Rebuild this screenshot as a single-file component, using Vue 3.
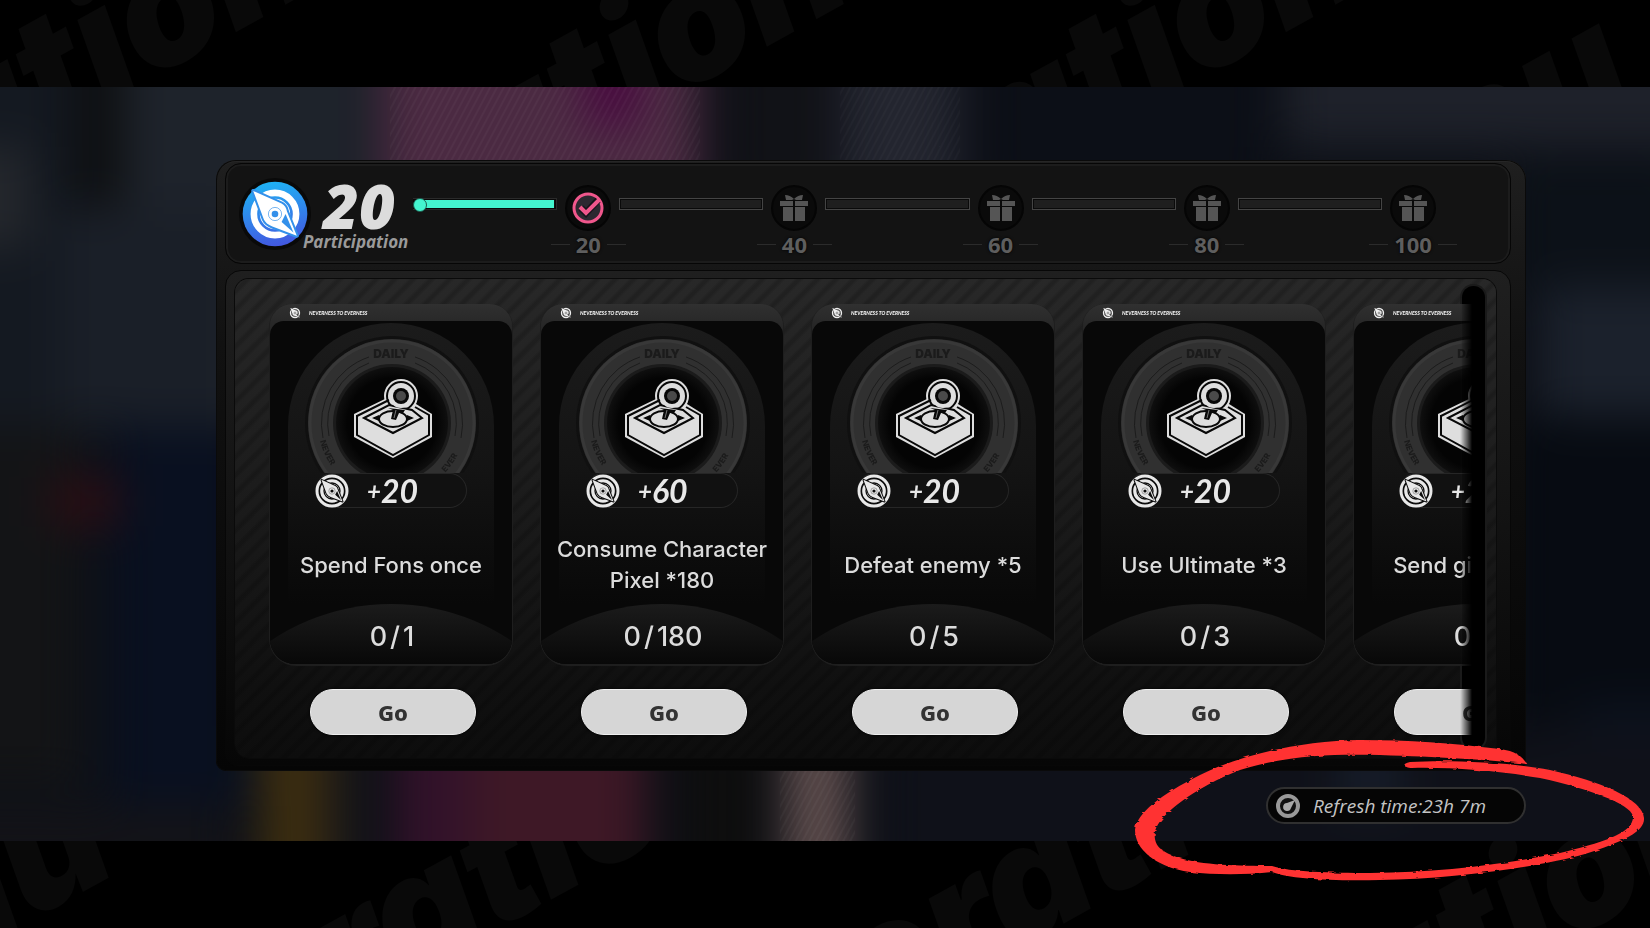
<template>
  <div class="page">
    <!-- Shared icon shapes -->
    <svg class="sprite" aria-hidden="true">
      <symbol id="compass" viewBox="0 0 100 100">
        <circle cx="50" cy="50" r="32" fill="none" stroke="currentColor" stroke-width="10" />
        <circle cx="50" cy="50" r="21" fill="none" stroke="currentColor" stroke-width="4" />
        <path d="M17 15 L60 34 Q67 38 68 46 L83 83 L46 69 Q36 65 33 58 Z" fill="currentColor" stroke="var(--cut)" stroke-width="6" stroke-linejoin="round" />
        <path d="M17 15 L60 34 Q67 38 68 46 L83 83 L46 69 Q36 65 33 58 Z" fill="currentColor" />
        <path d="M60 62 L66 50 L78 78 Z" fill="var(--cut)" />
        <circle cx="50" cy="50" r="10" fill="none" stroke="var(--cut)" stroke-width="1" />
        <circle cx="50" cy="50" r="5" fill="var(--cut)" />
      </symbol>
      <symbol id="gift" viewBox="0 0 28 28">
        <path d="M5 1 Q10 1 14 5 Q18 1 23 1 L22 6 L16 6 L14 5 L12 6 L6 6 Z" fill="currentColor" />
        <path d="M0 7 H13 V12 H0 Z M15 7 H28 V12 H15 Z" fill="currentColor" />
        <path d="M3 13 H13 V27 H3 Z M15 13 H25 V27 H15 Z" fill="currentColor" />
      </symbol>
    </svg>

    <div class="band">
      <svg class="band-art" viewBox="0 0 1650 87" preserveAspectRatio="xMidYMid slice" aria-hidden="true">
        <text transform="translate(-40 185) rotate(-29)">ation</text>
        <text transform="translate(400 250) rotate(-29)">nation</text>
        <text transform="translate(1010 185) rotate(-29)">ation</text>
        <text transform="translate(1460 200) rotate(-29)">nu</text>
      </svg>
    </div>

    <main class="stage">
      <svg class="backdrop" viewBox="0 0 1650 755" preserveAspectRatio="none" aria-hidden="true">
        <defs>
          <filter id="soft" x="-20%" y="-20%" width="140%" height="140%" color-interpolation-filters="sRGB">
            <feGaussianBlur stdDeviation="22" />
          </filter>
          <pattern id="hatch" width="6" height="10" patternUnits="userSpaceOnUse" patternTransform="rotate(28)">
            <path d="M1 0 V10" stroke="#fff" stroke-opacity="0.03" stroke-width="2" />
          </pattern>
        </defs>
        <rect width="1650" height="755" fill="#0d1017" />
        <g filter="url(#soft)">
          <rect
            v-for="(b, i) in blobs"
            :key="i"
            :x="b[0]"
            :y="b[1]"
            :width="b[2]"
            :height="b[3]"
            :fill="b[4]"
          />
        </g>
        <rect x="390" y="0" width="310" height="75" fill="url(#hatch)" />
        <rect x="840" y="0" width="120" height="75" fill="url(#hatch)" opacity="0.7" />
        <rect x="780" y="680" width="75" height="75" fill="url(#hatch)" />
      </svg>

      <section class="panel">
        <header class="summary">
          <div class="emblem">
            <svg viewBox="0 0 100 100" aria-hidden="true">
              <defs>
                <linearGradient id="blue" x1="0.3" y1="0" x2="0.5" y2="1">
                  <stop offset="0" stop-color="#1eb4f5" />
                  <stop offset="1" stop-color="#4258e0" />
                </linearGradient>
              </defs>
              <circle cx="50" cy="50" r="49" fill="url(#blue)" />
              <use href="#compass" width="100" height="100" />
            </svg>
          </div>
          <div class="score">
            <strong>{{ points }}</strong>
            <span>Participation</span>
          </div>
          <ol class="track">
            <li v-for="m in milestones" :key="m" class="step">
              <div class="bar" :class="{ done: points >= m }"></div>
              <div class="node">
                <span class="medal">
                  <svg v-if="points >= m" class="check" viewBox="0 0 34 34" aria-hidden="true">
                    <circle cx="17" cy="17" r="14" fill="#2c2830" stroke="#f0578c" stroke-width="3" />
                    <path d="M10 17 L15 22 L27 9" fill="none" stroke="#17131a" stroke-width="7" />
                    <path d="M9 16 L15 22 L28 9" fill="none" stroke="#f0578c" stroke-width="4" />
                  </svg>
                  <svg v-else class="gift" aria-hidden="true"><use href="#gift" /></svg>
                </span>
                <span class="mark">{{ m }}</span>
              </div>
            </li>
          </ol>
        </header>

        <div class="frame">
          <div class="well">
            <div class="viewport">
              <article v-for="(task, i) in tasks" :key="i" class="task">
                <div class="card">
                  <div class="tab">
                    <svg aria-hidden="true"><use href="#compass" /></svg>
                    <span>NEVERNESS TO EVERNESS</span>
                  </div>
                  <div class="face">
                    <svg class="art" viewBox="0 0 242 152" aria-hidden="true">
                      <defs>
                        <radialGradient :id="'hole' + i">
                          <stop offset="0.8" stop-color="#040404" />
                          <stop offset="1" stop-color="#0f0f0f" />
                        </radialGradient>
                        <path :id="'low-left' + i" d="M50 120 A74 74 0 0 0 86 167" />
                        <path :id="'low-right' + i" d="M158 165 A74 74 0 0 0 193 120" />
                      </defs>
                      <circle cx="122" cy="102" r="87" fill="#101010" />
                      <circle cx="122" cy="102" r="84" fill="#303030" />
                      <circle cx="122" cy="102" r="82" fill="none" stroke="#383838" stroke-width="3" />
                      <path d="M53 117 A70 70 0 0 1 99 36 M59 115 A64 64 0 0 1 99 42 M191 117 A70 70 0 0 0 145 36 M185 115 A64 64 0 0 0 145 42" fill="none" stroke="#1c1c1c" />
                      <circle cx="122" cy="102" r="59" fill="#1b1b1b" />
                      <circle cx="122" cy="102" r="56" :fill="'url(#hole' + i + ')'" />
                      <text class="daily" x="121" y="37" text-anchor="middle">DAILY</text>
                      <text class="rim"><textPath :href="'#low-left' + i">NEVER</textPath></text>
                      <text class="rim"><textPath :href="'#low-right' + i" startOffset="22">EVER</textPath></text>

                      <!-- arcade stick -->
                      <g transform="translate(0 1)">
                        <path d="M84 92 L117 76 L146 82 L162 92 V115 L123 136 L84 115 Z" fill="#dedede" />
                        <circle cx="131" cy="74" r="17" fill="#dedede" />
                        <path d="M87 94 L119 78 M145 85 L159 93 V113 L123 133 L87 113 V93" fill="none" stroke="#080808" stroke-width="2" />
                        <circle cx="131" cy="74" r="14" fill="none" stroke="#080808" stroke-width="2" />
                        <path d="M94 96 L119 83 L142 88 L152 96 L123 111 Z" fill="#dedede" stroke="#080808" stroke-width="2" />
                        <path d="M102 96 L109 93 V99 Z M144 96 L137 93 V99 Z" fill="#080808" />
                        <ellipse cx="123" cy="97" rx="14" ry="8" fill="#dedede" stroke="#080808" stroke-width="2" />
                        <path d="M118 86 L135 88 L133 91 L129 91 L126 98 L121 97 L123 88 Z" fill="#080808" />
                        <path d="M126 88 L124 96" stroke="#777" stroke-width="1" />
                        <circle cx="131" cy="74" r="12" fill="#dedede" />
                        <circle cx="131" cy="74" r="8" fill="#080808" />
                        <circle cx="131" cy="74" r="5" fill="#4a4a4a" />
                      </g>
                    </svg>
                    <div class="reward">
                      <svg aria-hidden="true">
                        <circle cx="17" cy="17" r="15" fill="#0c0c0c" stroke="#e8e8e8" stroke-width="3" />
                        <use href="#compass" x="1" y="1" width="32" height="32" />
                      </svg>
                      <span class="plus">+</span><b>{{ task.reward }}</b>
                    </div>
                    <p class="goal">{{ task.goal }}</p>
                    <div class="count">0<i>/</i>{{ task.total }}</div>
                  </div>
                </div>
                <button type="button" class="go">Go</button>
              </article>
            </div>
            <div class="rail"></div>
          </div>
        </div>
      </section>

      <div class="refresh">
        <svg viewBox="0 0 24 24" aria-hidden="true">
          <circle cx="12" cy="12" r="10" fill="#111" stroke="#999" stroke-width="4" />
          <path d="M19 6 L15 14 A4 4 0 1 1 11 9 Z" fill="#aaa" />
        </svg>
        <span>Refresh time:23h 7m</span>
      </div>
    </main>

    <div class="band">
      <svg class="band-art" viewBox="0 0 1650 87" preserveAspectRatio="xMidYMid slice" aria-hidden="true">
        <text transform="translate(-60 130) rotate(-29)">nu</text>
        <text transform="translate(260 220) rotate(-29)">oration</text>
        <text transform="translate(870 190) rotate(-29)">oration</text>
        <text transform="translate(1380 205) rotate(-29)">ation</text>
      </svg>
    </div>

    <svg class="scribble" viewBox="1120 720 530 208" aria-hidden="true">
      <filter id="brush">
        <feTurbulence type="fractalNoise" baseFrequency="0.12 0.4" numOctaves="2" />
        <feDisplacementMap in="SourceGraphic" scale="3" />
      </filter>
      <path
        filter="url(#brush)"
        fill="#ff3131"
        d="M1527 764 C1522 756 1515 751 1500 749 C1450 743 1410 740 1360 740 C1300 741 1240 755 1200 775 C1160 795 1137 813 1135 830 C1135 849 1155 867 1190 872 C1215 875 1245 875 1272 872 C1290 879 1330 881 1380 880 C1450 879 1540 867 1585 854 C1625 841 1645 831 1644 818 C1643 799 1600 781 1550 770 C1510 762 1450 760 1410 762 C1400 764 1405 768 1412 768 C1450 767 1500 771 1540 778 C1590 789 1630 804 1633 816 C1634 834 1600 843 1560 853 C1500 865 1440 872 1370 873 C1330 873 1290 872 1272 866 C1240 866 1200 865 1180 858 C1160 852 1153 845 1155 831 C1160 814 1194 788 1240 770 C1290 754 1340 754 1380 755 C1440 757 1480 759 1527 764 Z"
      />
    </svg>
  </div>
</template>

<script setup>
import { ref } from 'vue'

const points = ref(20)
const milestones = [20, 40, 60, 80, 100]

const tasks = [
  { reward: 20, goal: 'Spend Fons once', total: 1 },
  { reward: 60, goal: 'Consume Character Pixel *180', total: 180 },
  { reward: 20, goal: 'Defeat enemy *5', total: 5 },
  { reward: 20, goal: 'Use Ultimate *3', total: 3 },
  { reward: 20, goal: 'Send gifts once', total: 1 }
]

// x, y, width, height, colour of each out-of-focus patch
const blobs = [
  [-60, -60, 130, 400, '#141921'],
  [-60, 60, 90, 100, '#24272c'],
  [75, -60, 50, 190, '#0e1012'],
  [125, -60, 250, 400, '#1e232b'],
  [60, 120, 170, 220, '#1a1f28'],
  [-60, 340, 140, 360, '#131416'],
  [110, 340, 140, 380, '#091020'],
  [50, 390, 70, 50, '#2a0e14'],
  [380, -60, 320, 180, '#4b2a42'],
  [585, -60, 55, 100, '#48093f'],
  [725, -60, 105, 180, '#111217'],
  [840, -60, 120, 180, '#23252f'],
  [980, -60, 290, 180, '#0c0f17'],
  [1285, -60, 430, 120, '#1e212a'],
  [-60, 720, 290, 100, '#131318'],
  [1510, 70, 180, 140, '#0c1118'],
  [1540, 200, 170, 130, '#1b212c'],
  [1510, 330, 200, 320, '#070b12'],
  [1580, 620, 120, 60, '#0c1422'],
  [260, 640, 60, 180, '#3d2e10'],
  [320, 640, 30, 180, '#221d18'],
  [395, 640, 110, 180, '#32122a'],
  [470, 640, 175, 180, '#3e1826'],
  [680, 640, 85, 180, '#0e0e0e'],
  [785, 640, 65, 180, '#5c4b4b'],
  [880, 640, 830, 180, '#0f1119'],
  [1340, 660, 60, 60, '#171e2b']
]
</script>

<style>
body {
  margin: 0;
  background: #000;
}
</style>

<style scoped>
.page {
  position: relative;
  display: flex;
  flex-direction: column;
  min-height: 100vh;
  overflow: hidden;
  background: #000;
  color: #dcdcdc;
  font-family: Inter, "Noto Sans", sans-serif;
}

.page * {
  box-sizing: border-box;
}

.sprite {
  position: absolute;
  width: 0;
  height: 0;
}

.band {
  flex: none;
  height: 87px;
  overflow: hidden;
}

.band-art {
  display: block;
  width: 100%;
  height: 100%;
}

.band-art text {
  fill: #090909;
  font: italic 900 160px Inter, sans-serif;
}

/* ---------- stage ---------- */
.stage {
  position: relative;
  flex: 1;
  display: flex;
  flex-direction: column;
  padding: 73px 124px 10px 216px;
}

.backdrop {
  position: absolute;
  inset: 0;
  width: 100%;
  height: 100%;
}

.panel {
  position: relative;
  display: flex;
  flex-direction: column;
  gap: 6px;
  padding: 3px 15px 5px 9px;
  border-radius: 20px 20px 10px 10px;
  background: linear-gradient(#1f1f1f, #111 30%, #050505);
  box-shadow: inset 0 0 0 1px #0a0a0a, inset 0 2px 0 #262626;
}

/* ---------- summary row ---------- */
.summary {
  display: flex;
  height: 101px;
  padding-right: 66px;
  border: 1px solid #060606;
  border-radius: 16px;
  background: #131313;
  box-shadow: inset 0 0 0 2px #1c1c1c;
}

.emblem {
  --cut: #3390ea;
  flex: none;
  width: 72px;
  height: 72px;
  margin: 14px 0 0 13px;
  padding: 3px;
  border-radius: 50%;
  background: #090909;
  color: #fff;
}

.emblem svg {
  display: block;
  width: 66px;
  height: 66px;
}

.score {
  display: flex;
  flex: none;
  flex-direction: column;
  width: 104px;
  margin-left: -8px;
}

.score strong {
  margin-top: 14px;
  padding-left: 20px;
  font: italic 800 62px/54px "Open Sans", sans-serif;
}

.score span {
  color: #9a9a9a;
  font: italic 700 17px/20px "Open Sans", sans-serif;
  white-space: nowrap;
}

.track {
  flex: 1;
  display: flex;
  margin: 0 0 0 6px;
  padding: 0;
  list-style: none;
}

.step {
  flex: 1;
  display: flex;
  align-items: flex-start;
}

.bar {
  position: relative;
  flex: 1;
  height: 12px;
  margin-top: 34px;
  border: 1px solid #444;
  background: #1f1f1f;
  box-shadow: inset 0 0 0 1px #0a0a0a;
}

.bar.done {
  border-color: #2a2a2a;
  border-left: 0;
  background: linear-gradient(#44f5cf, #44f5cf) 2px 1px / calc(100% - 4px) 8px no-repeat #111;
}

.bar.done::before {
  content: "";
  position: absolute;
  left: 0;
  top: -1px;
  width: 12px;
  height: 12px;
  border: 1px solid #1b5a4d;
  border-radius: 50%;
  background: #44f5cf;
}

.node {
  display: flex;
  flex: none;
  flex-direction: column;
  align-items: center;
  width: 62px;
  padding-top: 21px;
}

.medal {
  display: flex;
  align-items: center;
  justify-content: center;
  width: 46px;
  height: 46px;
  border: 2px solid #050505;
  border-radius: 50%;
  background: #0a0a0a;
  color: #555;
}

.check {
  width: 34px;
  height: 34px;
}

.gift {
  width: 28px;
  height: 28px;
}

.mark {
  display: flex;
  align-items: center;
  gap: 6px;
  color: #5e5e5e;
  font: 700 22px/26px "Noto Sans", sans-serif;
  text-shadow: 0 0 3px #000;
}

.mark::before,
.mark::after {
  content: "";
  width: 19px;
  height: 1px;
  background: #2b2b2b;
}

/* ---------- task list ---------- */
.frame {
  padding: 8px 14px 7px 9px;
  border: 1px solid #070707;
  border-radius: 16px 16px 12px 12px;
  background: linear-gradient(#1f1f1f, #060606);
}

.well {
  display: flex;
  border-radius: 14px;
  background:
    repeating-linear-gradient(135deg, transparent 0 5px, rgba(0, 0, 0, 0.18) 8px 10px, transparent 13px),
    linear-gradient(#282828, #1a1a1a 50%, #101010 85%, #0d0d0d);
  box-shadow: 0 0 0 1px #0a0a0a;
}

.viewport {
  position: relative;
  z-index: 1;
  flex: 1;
  display: flex;
  gap: 29px;
  min-width: 0;
  padding: 25px 0 23px 35px;
  overflow: hidden;
  mask-image: linear-gradient(to right, #000 calc(100% - 12px), transparent);
}

.rail {
  flex: none;
  width: 23px;
  margin: 7px 11px 9px -10px;
  border-radius: 12px;
  background: #000;
  box-shadow: 0 0 0 2px #1a1a1a;
}

.task {
  display: flex;
  flex: none;
  flex-direction: column;
  align-items: center;
  gap: 25px;
  width: 242px;
}

.card {
  width: 100%;
  border-radius: 22px 22px 26px 26px;
  background: linear-gradient(#303030, #262626 24px, #1c1c1c 60px);
  box-shadow: 0 1px 0 1px #1e1e1e;
}

.tab {
  --cut: #333;
  display: flex;
  align-items: center;
  gap: 7px;
  height: 17px;
  padding-left: 18px;
  color: #efefef;
}

.tab svg {
  width: 14px;
  height: 14px;
}

.tab span {
  font: italic 900 5px/8px Lato, sans-serif;
}

.face {
  position: relative;
  display: flex;
  flex-direction: column;
  align-items: center;
  overflow: hidden;
  border-radius: 14px 14px 25px 25px;
  background: #080808;
}

.face::before {
  content: "";
  position: absolute;
  inset: 2px 18px 60px;
  border-radius: 103px 103px 0 0;
  background: linear-gradient(#1b1b1b, #141414 50%, #080808);
}

.art {
  position: relative;
  display: block;
  width: 100%;
  height: 152px;
}

.daily {
  fill: #1b1b1b;
  font: 900 12px Inter, sans-serif;
}

.rim {
  fill: #1b1b1b;
  font: 800 8px Inter, sans-serif;
}

.reward {
  --cut: #0c0c0c;
  position: relative;
  display: flex;
  align-items: center;
  width: 152px;
  height: 35px;
  border: 1px solid #262626;
  border-left: 0;
  border-radius: 18px;
  background: #111;
  color: #e8e8e8;
  font-family: Lato, sans-serif;
  font-style: italic;
}

.reward svg {
  flex: none;
  width: 34px;
  height: 34px;
  margin-right: 18px;
}

.reward .plus {
  font-size: 24px;
  font-weight: 700;
  line-height: 34px;
}

.reward b {
  font-size: 32px;
  font-weight: 700;
  line-height: 34px;
}

.goal {
  position: relative;
  display: flex;
  align-items: center;
  justify-content: center;
  width: 100%;
  height: 96px;
  margin: 0;
  padding: 18px 14px 0;
  font-size: 22px;
  font-weight: 500;
  line-height: 31px;
  text-align: center;
}

.count {
  position: relative;
  z-index: 0;
  width: 100%;
  height: 60px;
  padding: 5px 0 0 2px;
  font-size: 27px;
  font-weight: 500;
  line-height: 55px;
  text-align: center;
}

.count i {
  margin: 0 3px;
  font-style: normal;
}

.count::before {
  content: "";
  position: absolute;
  inset: 0;
  z-index: -1;
  background: linear-gradient(#1b1b1b, #080808);
  clip-path: circle(216px at 50% 216px);
}

.go {
  width: 166px;
  height: 46px;
  margin-left: 4px;
  padding: 0;
  border: 1px solid #efefef;
  border-radius: 23px;
  background: #d6d6d6;
  color: #333;
  font: 800 22px/42px "Noto Sans", sans-serif;
  box-shadow: 0 0 3px #000;
  cursor: pointer;
}

/* ---------- refresh note ---------- */
.refresh {
  position: relative;
  display: flex;
  align-items: center;
  align-self: flex-end;
  gap: 13px;
  width: 260px;
  height: 37px;
  margin-top: 16px;
  padding-left: 8px;
  border: 2px solid #303030;
  border-radius: 19px;
  background: #050505;
  color: #c4c4c4;
  font: italic 500 19px/32px "Open Sans", sans-serif;
  white-space: nowrap;
}

.refresh svg {
  flex: none;
  width: 24px;
  height: 24px;
}

.scribble {
  position: absolute;
  right: 0;
  bottom: 0;
  width: 530px;
  height: 208px;
  pointer-events: none;
}
</style>
